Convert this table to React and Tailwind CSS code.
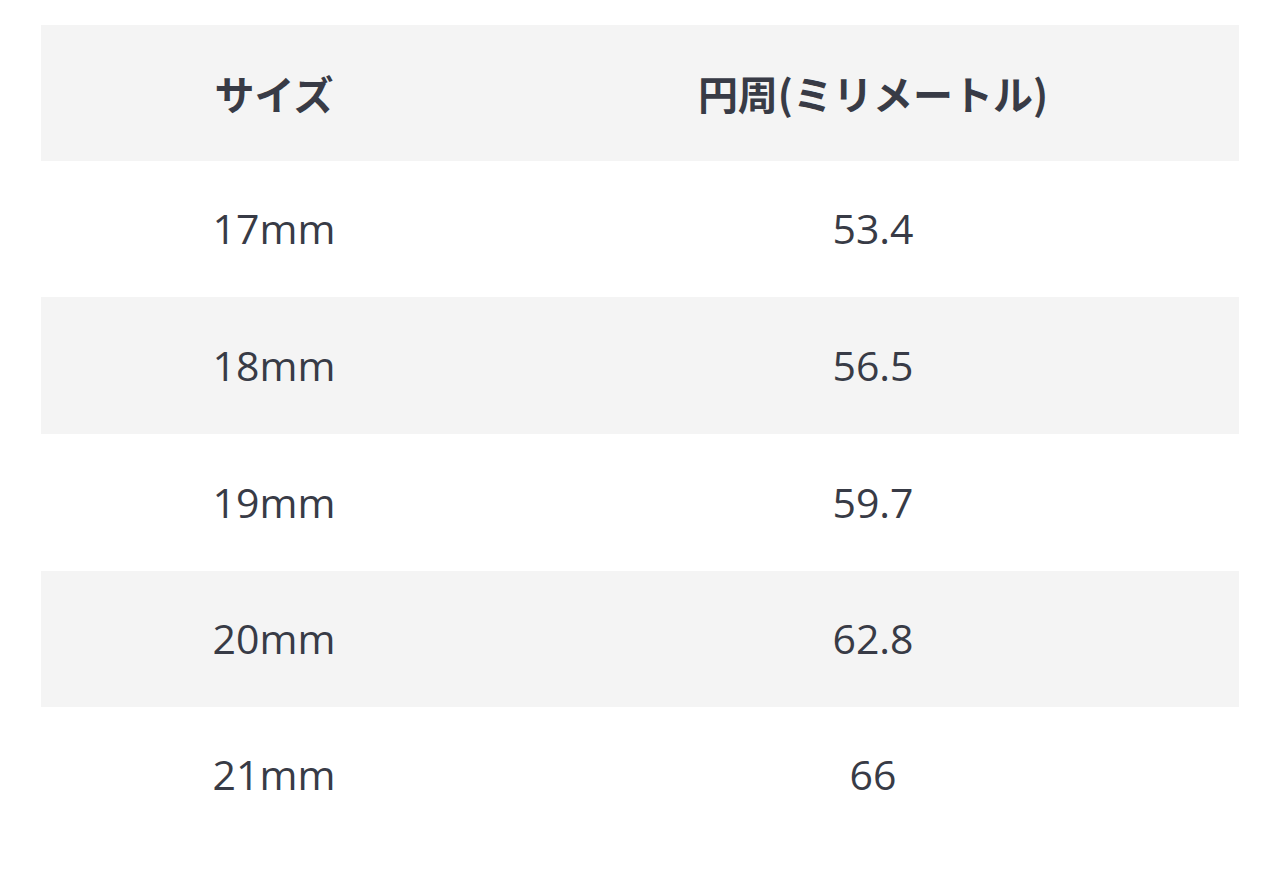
export default function App() {
  const rows = [
    ["17mm", "53.4", "h-[136px]", "bg-white"],
    ["18mm", "56.5", "h-[137px]", "bg-[#f4f4f4]"],
    ["19mm", "59.7", "h-[137px]", "bg-white"],
    ["20mm", "62.8", "h-[136px]", "bg-[#f4f4f4]"],
    ["21mm", "66", "h-[136px]", "bg-white"],
  ];
  return (
    <div
      className="w-[1280px] h-[886px] bg-white pt-[25px] px-[41px] text-[#383b46]"
      style={{ fontFamily: '"Open Sans", "Noto Sans CJK JP", sans-serif' }}
    >
      <div
        className="grid grid-cols-[466px_732px] h-[136px] bg-[#f4f4f4] items-center text-[40px] font-bold"
        style={{ fontFamily: '"Noto Sans CJK JP", sans-serif' }}
      >
        <div className="text-center">サイズ</div>
        <div className="text-center">円周(ミリメートル)</div>
      </div>
      {rows.map(([a, b, h, bg]) => (
        <div key={a} className={`grid grid-cols-[466px_732px] items-center text-[41px] ${h} ${bg}`}>
          <div className="text-center">{a}</div>
          <div className="text-center">{b}</div>
        </div>
      ))}
    </div>
  );
}
